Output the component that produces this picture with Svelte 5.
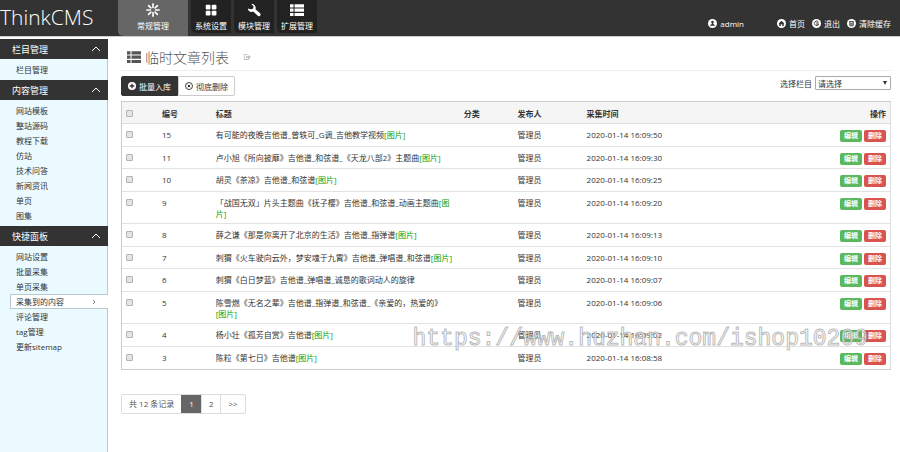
<script lang="ts">
	interface Row {
		id: number;
		title: string;
		time: string;
		image?: boolean;
		breakTag?: boolean;
	}

	const navItems = [
		{ icon: 'burst', label: '常规管理' },
		{ icon: 'grid', label: '系统设置' },
		{ icon: 'wrench', label: '模块管理' },
		{ icon: 'list', label: '扩展管理' }
	];

	const userLinks = [
		{ icon: 'home', label: '首页' },
		{ icon: 'exit', label: '退出' },
		{ icon: 'trash', label: '清除缓存' }
	];

	const groups = [
		{ title: '栏目管理', items: ['栏目管理'] },
		{
			title: '内容管理',
			items: ['网站模板', '整站源码', '教程下载', '仿站', '技术问答', '新闻资讯', '单页', '图集']
		},
		{
			title: '快捷面板',
			items: ['网站设置', '批量采集', '单页采集', '采集到的内容', '评论管理', 'tag管理', '更新sitemap']
		}
	];

	const rows: Row[] = [
		{ id: 15, title: '有可能的夜晚吉他谱_曾轶可_G调_吉他教学视频', time: '16:09:50', image: true },
		{ id: 11, title: '卢小旭《所向披靡》吉他谱_和弦谱_《天龙八部2》主题曲', time: '16:09:30', image: true },
		{ id: 10, title: '胡灵《茶凉》吉他谱_和弦谱', time: '16:09:25', image: true },
		{ id: 9, title: '「战国无双」片头主题曲《抚子樱》吉他谱_和弦谱_动画主题曲', time: '16:09:20', image: true },
		{ id: 8, title: '薛之谦《那是你离开了北京的生活》吉他谱_指弹谱', time: '16:09:13', image: true },
		{ id: 7, title: '刺猬《火车驶向云外，梦安魂于九霄》吉他谱_弹唱谱_和弦谱', time: '16:09:10', image: true },
		{ id: 6, title: '刺猬《白日梦蓝》吉他谱_弹唱谱_诚恳的歌词动人的旋律', time: '16:09:07' },
		{ id: 5, title: '陈雪燃《无名之辈》吉他谱_指弹谱_和弦谱_《亲爱的，热爱的》', time: '16:09:06', image: true, breakTag: true },
		{ id: 4, title: '杨小壮《孤芳自赏》吉他谱', time: '16:09:02', image: true },
		{ id: 3, title: '陈粒《第七日》吉他谱', time: '16:08:58', image: true }
	];

	let activeNav = $state(0);
	let activeItem = $state('采集到的内容');
	let selected = $state<number[]>([]);

	function toggleAll(e: Event) {
		selected = (e.target as HTMLInputElement).checked ? rows.map((r) => r.id) : [];
	}
</script>

{#snippet icon(name: string)}
	<svg class="icon" viewBox="0 0 16 16" fill="currentColor" aria-hidden="true">
		{#if name === 'burst'}
			<g stroke="currentColor" stroke-width="1.9" stroke-linecap="round">
				<path d="M8 1v4M8 11v4M1 8h4M11 8h4M3 3l2.6 2.6M10.4 10.4L13 13M13 3l-2.600 2.600M5.600 10.400L3 13" />
			</g>
		{:else if name === 'grid'}
			<rect x="2" y="2" width="5.4" height="5.4" rx="1" />
			<rect x="8.8" y="2" width="5.4" height="5.4" rx="1" />
			<rect x="2" y="8.8" width="5.4" height="5.4" rx="1" />
			<rect x="8.8" y="8.8" width="5.4" height="5.4" rx="1" />
		{:else if name === 'wrench'}
			<path d="M1 6.200A4.200 4.200 0 0 0 7.200 9.800l4.800 4.600a1.900 1.900 0 0 0 2.900-2.700L9.700 7A4.600 4.600 0 0 0 5 1l2.600 3-.7 2.600-2.700.6z" />
		{:else if name === 'list'}
			<path d="M0 1.500h4v3.500H0zM5.200 1.500H16V5H5.200zM0 6.400h4v3.500H0zM5.200 6.400H16v3.500H5.200zM0 11.300h4v3.500H0zM5.200 11.300H16v3.500H5.200z" />
		{:else if name === 'share'}
			<path d="M9 3H2.500v10h9v-3" fill="none" stroke="currentColor" stroke-width="1.8" />
			<path d="M6 6.500h5V3.500L15.500 8 11 12V9.500H6z" />
		{:else if name === 'remove'}
			<circle cx="8" cy="8" r="7" fill="none" stroke="currentColor" stroke-width="1.8" />
			<path d="M5.500 5.500l5 5M10.500 5.500l-5 5" stroke="currentColor" stroke-width="2" />
		{:else}
			<circle cx="8" cy="8" r="8" />
			{#if name === 'user'}
				<path class="cut" d="M8 3a2.200 2.400 0 0 1 1.200 4.500v1.500l3 1.500v1.700H3.800v-1.700l3-1.500V7.500A2.200 2.400 0 0 1 8 3z" />
			{:else if name === 'home'}
				<path class="cut" d="M8 3l5.200 5H12v4.500H9.300V9.300H6.700v3.200H4V8H2.800z" />
			{:else if name === 'exit'}
				<path class="cut-line" d="M11.500 5.300A4 4 0 1 0 12 9.200H7.500M7.500 7h4" />
			{:else if name === 'trash'}
				<path class="cut-line" d="M5 5v7h6V5M4 4.500h8M7 6.500v4M9 6.500v4" />
			{:else}
				<path class="cut" d="M6.700 3.500h2.600v3.200h3.200v2.600H9.300v3.200H6.700V9.300H3.500V6.700h3.200z" />
			{/if}
		{/if}
	</svg>
{/snippet}

<div class="page">
	<header class="topbar">
		<div class="brand">ThinkCMS</div>
		<nav class="main-nav">
			{#each navItems as item, i}
				<button type="button" class="nav-btn" class:active={activeNav === i} onclick={() => (activeNav = i)}>
					{@render icon(item.icon)}
					<span>{item.label}</span>
				</button>
			{/each}
		</nav>
		<div class="user-nav">
			<a class="user" href="#admin">{@render icon('user')}admin</a>
			{#each userLinks as link}
				<a href="#{link.icon}">{@render icon(link.icon)}{link.label}</a>
			{/each}
		</div>
	</header>

	<div class="body">
		<aside class="sidebar">
			{#each groups as group}
				<button type="button" class="group-head">
					{group.title}
					<svg class="chevron" viewBox="0 0 10 6" aria-hidden="true"><path d="M1 5l4-4 4 4" /></svg>
				</button>
				<ul>
					{#each group.items as item}
						<li class:active={activeItem === item}>
							<a href="#{item}" onclick={() => (activeItem = item)}>{item}</a>
							{#if activeItem === item}
								<svg class="arrow" viewBox="0 0 4 6" aria-hidden="true"><path d="M1 1l2 2-2 2" /></svg>
							{/if}
						</li>
					{/each}
				</ul>
			{/each}
		</aside>

		<main class="content">
			<h1>
				{@render icon('list')}
				临时文章列表
				<a href="#open" aria-label="打开">{@render icon('share')}</a>
			</h1>

			<div class="toolbar">
				<div class="btn-group">
					<button type="button" class="btn dark">{@render icon('plus')}批量入库</button>
					<button type="button" class="btn">{@render icon('remove')}彻底删除</button>
				</div>
				<div class="filter">
					<label for="category">选择栏目</label>
					<div class="select-wrap">
						<select id="category">
							<option>请选择</option>
						</select>
					</div>
				</div>
			</div>

			<div class="table-wrap">
				<table>
					<thead>
						<tr>
							<th class="col-check"><input type="checkbox" aria-label="全选" onchange={toggleAll} /></th>
							<th class="col-id">编号</th>
							<th class="col-title">标题</th>
							<th class="col-cat">分类</th>
							<th class="col-user">发布人</th>
							<th>采集时间</th>
							<th class="col-actions">操作</th>
						</tr>
					</thead>
					<tbody>
						{#each rows as row (row.id)}
							<tr>
								<td class="col-check"><input type="checkbox" aria-label="选择 {row.id}" value={row.id} bind:group={selected} /></td>
								<td>{row.id}</td>
								<td class="col-title">{row.title}{#if row.breakTag}<br />{/if}{#if row.image}<span class="tag">[图片]</span>{/if}</td>
								<td></td>
								<td>管理员</td>
								<td>2020-01-14 {row.time}</td>
								<td class="col-actions">
									<div class="actions">
										<button type="button" class="label edit">编辑</button>
										<button type="button" class="label delete">删除</button>
									</div>
								</td>
							</tr>
						{/each}
					</tbody>
				</table>
				<div class="watermark">https://www.huzhan.com/ishop10209</div>
			</div>

			<nav class="pagination" aria-label="分页">
				<span>共 12 条记录</span>
				<a class="current" href="#page-1">1</a>
				<a href="#page-2">2</a>
				<a href="#page-next">&gt;&gt;</a>
			</nav>
		</main>
	</div>
</div>

<style>
	:global(body) {
		background: #fff;
		color: #333;
		font-family: 'Open Sans', 'Noto Sans CJK SC', sans-serif;
		font-size: 8px;
		line-height: 11px;
	}

	* {
		box-sizing: border-box;
	}

	button,
	select {
		font: inherit;
		color: inherit;
		cursor: pointer;
	}

	a {
		color: inherit;
		text-decoration: none;
	}

	.page {
		display: flex;
		flex-direction: column;
		min-height: 100vh;
	}

	.icon {
		display: block;
		flex-shrink: 0;
		width: 9px;
		height: 9px;
	}

	.cut {
		fill: #333;
	}

	.cut-line {
		fill: none;
		stroke: #333;
		stroke-width: 1.6;
	}

	/* Top bar */
	.topbar {
		display: flex;
		height: 37px;
		background: #333;
		border-bottom: 1px solid #ccc;
		color: #fff;
	}

	.brand {
		width: 118px;
		font-size: 21px;
		font-weight: 300;
		line-height: 34px;
	}

	.main-nav {
		display: flex;
		align-items: flex-start;
		gap: 3px;
	}

	.nav-btn {
		display: flex;
		flex-direction: column;
		align-items: center;
		gap: 3px;
		width: 40px;
		height: 33px;
		padding: 3px 0 0;
		border: 0;
		border-radius: 0 0 0 5px;
		background: #222;
	}

	.nav-btn .icon {
		width: 14px;
		height: 14px;
	}

	.nav-btn.active {
		width: 70px;
		height: 36px;
		background: #666;
	}

	.user-nav {
		display: flex;
		align-items: center;
		gap: 7px;
		margin-left: auto;
		padding: 11px 9px 0 0;
	}

	.user-nav a {
		display: flex;
		align-items: center;
		gap: 3px;
	}

	.user-nav .user {
		margin-right: 26px;
	}

	/* Sidebar */
	.body {
		display: flex;
		flex: 1;
	}

	.sidebar {
		flex: 0 0 108px;
		margin-top: 2px;
		background: #ebfaff;
		box-shadow: inset -1px 0 #b7c9d2;
	}

	.group-head {
		display: flex;
		align-items: center;
		justify-content: space-between;
		width: 100%;
		height: 20px;
		padding: 0 7px 0 12px;
		border: 0;
		background: #333;
		color: #fff;
		font-size: 9px;
	}

	.chevron {
		width: 10px;
		height: 6px;
		fill: none;
		stroke: #fff;
	}

	ul {
		margin: 0;
		padding: 3px 0;
		list-style: none;
	}

	li {
		display: flex;
		align-items: center;
		justify-content: space-between;
		height: 15px;
		padding-left: 16px;
	}

	li.active {
		margin-left: 10px;
		padding: 0 12px 0 5px;
		border: 1px solid #b7c9d2;
		border-right: 0;
		background: #fff;
	}

	.arrow {
		width: 4px;
		height: 6px;
		fill: none;
		stroke: #666;
		stroke-width: 0.8;
	}

	/* Content */
	.content {
		flex: 1;
		min-width: 0;
		padding: 7px 9px 0 13px;
	}

	h1 {
		display: flex;
		align-items: center;
		gap: 4px;
		height: 27px;
		margin: 0 0 5px;
		padding-left: 6px;
		border-bottom: 1px solid #eee;
		color: #555;
		font-size: 14px;
		font-weight: 300;
	}

	h1 .icon {
		width: 14px;
		height: 14px;
	}

	h1 a {
		margin-left: 10px;
		color: #bbb;
	}

	h1 a .icon {
		width: 8px;
		height: 8px;
	}

	.toolbar {
		display: flex;
		align-items: flex-start;
		justify-content: space-between;
		margin-bottom: 5px;
	}

	.btn-group {
		display: flex;
	}

	.btn {
		display: flex;
		align-items: center;
		gap: 3px;
		height: 20px;
		padding: 0 6px;
		border: 1px solid #ccc;
		border-radius: 0 2px 2px 0;
		background: #fff;
	}

	.btn .icon {
		width: 8px;
		height: 8px;
	}

	.btn.dark {
		border-color: #333;
		border-radius: 2px 0 0 2px;
		background: #333;
		color: #fff;
	}

	.filter {
		display: flex;
		align-items: center;
		gap: 3px;
	}

	.select-wrap {
		position: relative;
	}

	.select-wrap::after {
		content: '';
		position: absolute;
		top: 5px;
		right: 4px;
		border: 2px solid transparent;
		border-top: 4px solid #333;
		border-bottom: 0;
		pointer-events: none;
	}

	select {
		display: block;
		width: 76px;
		height: 14px;
		padding: 0 2px;
		border: 1px solid #aaa;
		border-radius: 1px;
		background: #fff;
		appearance: none;
	}

	.table-wrap {
		position: relative;
	}

	table {
		width: 100%;
		border: 1px solid #ccc;
		border-right-color: #ddd;
		border-spacing: 0;
		table-layout: fixed;
	}

	th,
	td {
		height: 22px;
		padding: 5px 4px 4px;
		border-bottom: 1px solid #e2e2e2;
		text-align: left;
		vertical-align: top;
	}

	th {
		background: #f5f5f5;
		border-color: #ddd;
		padding-top: 6px;
		font-weight: 700;
	}

	tbody tr:nth-child(odd) td {
		height: 23px;
	}

	tbody tr:last-child td {
		border-bottom: 0;
	}

	.col-check { width: 36px; }
	.col-id { width: 7%; }
	.col-title { width: 248px; padding-right: 2px; }
	.col-cat { width: 7%; }
	.col-user { width: 9%; }
	.col-actions { text-align: right; }

	td.col-actions {
		padding-top: 6px;
		padding-bottom: 3px;
	}

	input[type='checkbox'] {
		display: block;
		width: 7px;
		height: 7px;
		margin: 2px 0 0;
		border: 1px solid #b4b4b4;
		border-radius: 1px;
		background: #e4e4e4;
		appearance: none;
	}

	input[type='checkbox']:checked {
		background: #555;
	}

	.tag {
		color: #00a000;
	}

	.actions {
		display: flex;
		justify-content: flex-end;
		gap: 2px;
	}

	.label {
		width: 22px;
		height: 12px;
		padding: 0;
		border: 0;
		border-radius: 2px;
		color: #fff;
		font-size: 7px;
		font-weight: 700;
		line-height: 12px;
	}

	.edit { background: #5cb85c; }
	.delete { background: #d9534f; }

	.watermark {
		position: absolute;
		right: 23px;
		bottom: 15px;
		color: rgba(255, 255, 255, 0.7);
		font-family: 'Liberation Mono', monospace;
		font-size: 23px;
		line-height: 32px;
		pointer-events: none;
		-webkit-text-stroke: 1px rgba(140, 140, 140, 0.6);
	}

	/* Pagination */
	.pagination {
		display: inline-flex;
		margin-top: 24px;
		border: 1px solid #ddd;
		border-radius: 2px;
		color: #555;
		line-height: 18px;
	}

	.pagination > * {
		padding: 0 7px;
	}

	.pagination a {
		border-left: 1px solid #ddd;
	}

	.pagination .current {
		background: #666;
		border-color: #666;
		color: #fff;
	}
</style>
